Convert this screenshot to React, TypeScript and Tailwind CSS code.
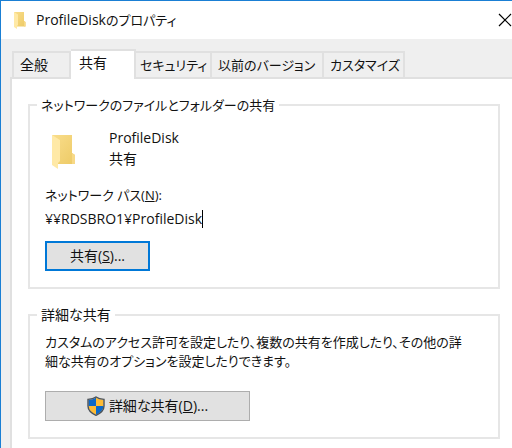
import { useState } from "react";
import type { ReactNode } from "react";

const tabs = [
  { label: "全般", className: "w-[59px] pl-[6px] text-sm" },
  { label: "共有", className: "w-[65px] pl-2 text-sm" },
  { label: "セキュリティ", className: "w-[76px] pl-1" },
  { label: "以前のバージョン", className: "w-[112px] pl-[6px]" },
  { label: "カスタマイズ", className: "w-[81px] pl-[6px]" },
];

function FolderIcon({ className }: { className: string }) {
  return (
    <svg viewBox="0 0 24 34" preserveAspectRatio="none" className={className} aria-hidden="true">
      <defs>
        <linearGradient id="folder-back" x1="0" y1="0" x2="1" y2="1">
          <stop offset="0" stopColor="#f9dd8b" />
          <stop offset="1" stopColor="#edca66" />
        </linearGradient>
      </defs>
      <path d="M0 0H20V18L23 20V29H6Z" fill="url(#folder-back)" />
      <path d="M0 0L8 5V26L6 28V34L0 30Z" fill="#ffe9a6" />
      <path d="M20 18L23 20V29H20Z" fill="#f7d987" />
    </svg>
  );
}

function ShieldIcon() {
  return (
    <svg viewBox="0 0 18 20" className="h-5 w-[18px]" aria-hidden="true">
      <defs>
        <clipPath id="shield">
          <path d="M9 1.500C7 3 4.500 3.700 1.500 3.800V10C1.500 14 5 17 9 18.800C13 17 16.500 14 16.500 10V3.800C13.500 3.700 11 3 9 1.500Z" />
        </clipPath>
      </defs>
      <g clipPath="url(#shield)">
        <path d="M0 0H9V10H0ZM9 10H18V20H9Z" fill="#0b68c8" />
        <path d="M9 0H18V10H9ZM0 10H9V20H0Z" fill="#fdbb35" />
      </g>
      <path
        d="M9 1C7 2.600 4.500 3.300 1 3.400V10C1 14.300 5 17.500 9 19.300C13 17.500 17 14.300 17 10V3.400C13.500 3.300 11 2.600 9 1Z"
        fill="none"
        stroke="#4c5258"
        strokeWidth="1.400"
      />
    </svg>
  );
}

function Group({ title, className, children }: { title: ReactNode; className: string; children: ReactNode }) {
  return (
    <fieldset className={`border-2 border-[#e6e6e6] pl-[15px] pr-3 ${className}`}>
      <legend className="-ml-2 px-1 leading-5">{title}</legend>
      {children}
    </fieldset>
  );
}

export default function App() {
  const [active, setActive] = useState(1);

  return (
    <div className="flex min-h-screen flex-col overflow-hidden border-l border-t border-[#1a7fd4] bg-[#efefef] font-['Open_Sans','Noto_Sans_CJK_JP',sans-serif] text-[13px] leading-5 text-[#111111] [font-feature-settings:'palt']">
      <header className="flex h-[38px] items-center bg-white pl-[13px]">
        <FolderIcon className="h-[17px] w-3" />
        <h1 className="ml-[10px] flex-1 text-[13px]">
          <span className="text-sm">ProfileDisk</span>のプロパティ
        </h1>
        <button type="button" aria-label="閉じる" className="text-black">
          <svg viewBox="0 0 14 14" className="h-[14px] w-[14px]" aria-hidden="true">
            <path d="M1 1L13 13M13 1L1 13" stroke="currentColor" strokeWidth="1.200" />
          </svg>
        </button>
      </header>

      <div role="tablist" className="mt-[10px] flex items-end pl-[11px]">
        {tabs.map((tab, i) => (
          <button
            key={tab.label}
            type="button"
            role="tab"
            aria-selected={i === active}
            onClick={() => setActive(i)}
            className={`shrink-0 whitespace-nowrap border-t-2 border-r-2 border-[#e0e0e0] text-left ${tab.className} ${
              i === active ? "relative -mb-[2px] h-[30px] bg-white pb-1" : "h-[26px]"
            } ${i === 0 ? "border-l-2" : ""}`}
          >
            {tab.label}
          </button>
        ))}
      </div>

      <main className="ml-[9px] flex-1 border-l-2 border-t-2 border-[#e0e0e0] bg-white pb-2 pl-4 pr-3 pt-4">
        <Group title="ネットワークのファイルとフォルダーの共有" className="pb-4">
          <div className="mt-3 flex">
            <FolderIcon className="ml-[7px] mt-2 h-[34px] w-6" />
            <div className="ml-[33px] text-sm leading-[21px]">
              <p>ProfileDisk</p>
              <p>共有</p>
            </div>
          </div>

          <label htmlFor="path" className="mt-4 block">
            ネットワーク パス(<u>N</u>):
          </label>
          <div className="mt-1 flex items-center text-sm">
            <input
              id="path"
              readOnly
              value="¥¥RDSBRO1¥ProfileDisk"
              className="field-sizing-content leading-5 outline-none"
            />
            <span className="h-[18px] w-px bg-black" />
          </div>

          <button
            type="button"
            className="mt-3 h-[30px] w-[105px] border-2 border-[#0078d7] bg-[#e1e1e1] text-sm"
          >
            共有(<u>S</u>)...
          </button>
        </Group>

        <Group title={<span className="text-sm">詳細な共有</span>} className="mt-4 pb-4">
          <p className="mt-2 pr-4 leading-[19px]">
            カスタムのアクセス許可を設定したり、複数の共有を作成したり、その他の詳細な共有のオプションを設定したりできます。
          </p>
          <button
            type="button"
            className="mt-5 flex h-[30px] w-[205px] items-center justify-center gap-1 border border-[#adadad] bg-[#e1e1e1] text-sm"
          >
            <ShieldIcon />
            <span>
              詳細な共有(<u>D</u>)...
            </span>
          </button>
        </Group>
      </main>
    </div>
  );
}
